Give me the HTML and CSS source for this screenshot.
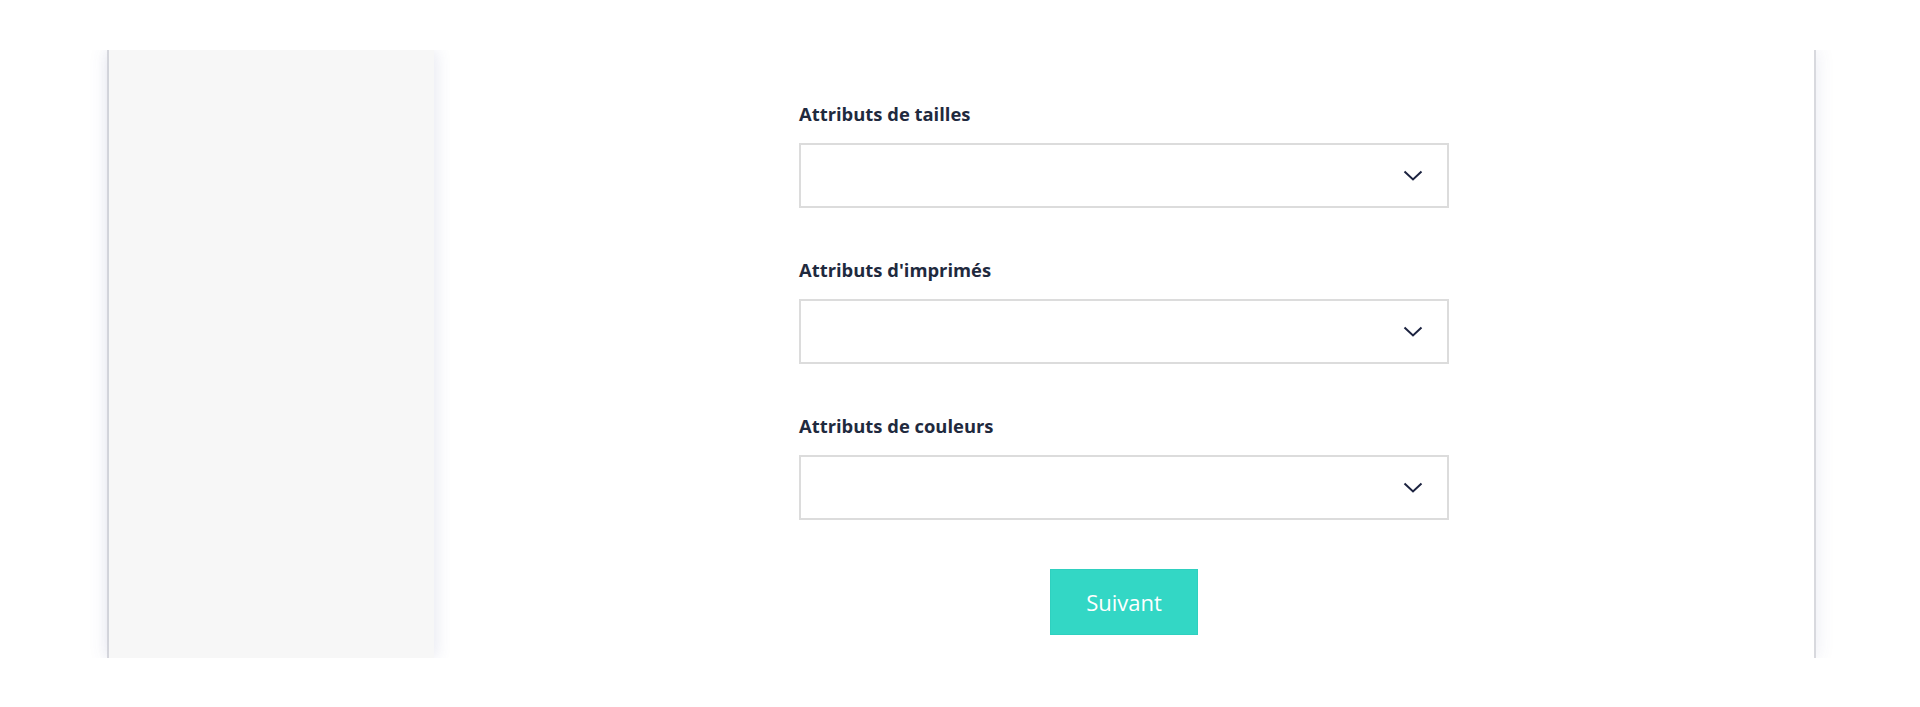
FILE: index.html
```html
<!DOCTYPE html>
<html lang="fr">
<head>
<meta charset="utf-8">
<title>Attributs</title>
<link rel="stylesheet" href="styles.css">
</head>
<body>
<div class="page">
  <div class="frame">
    <div class="app">
      <aside class="sidebar"></aside>
      <main class="main">
        <form class="form">
          <div class="field">
            <label class="label">Attributs de tailles</label>
            <div class="select"><svg class="chev" viewBox="0 0 20 11" width="20" height="11"><path d="M1.5 1.5 L10 9.5 L18.5 1.5" fill="none" stroke="#1c2340" stroke-width="2"/></svg></div>
          </div>
          <div class="field">
            <label class="label">Attributs d'imprimés</label>
            <div class="select"><svg class="chev" viewBox="0 0 20 11" width="20" height="11"><path d="M1.5 1.5 L10 9.5 L18.5 1.5" fill="none" stroke="#1c2340" stroke-width="2"/></svg></div>
          </div>
          <div class="field">
            <label class="label">Attributs de couleurs</label>
            <div class="select"><svg class="chev" viewBox="0 0 20 11" width="20" height="11"><path d="M1.5 1.5 L10 9.5 L18.5 1.5" fill="none" stroke="#1c2340" stroke-width="2"/></svg></div>
          </div>
          <div class="actions">
            <button type="button" class="btn">Suivant</button>
          </div>
        </form>
      </main>
    </div>
  </div>
</div>
</body>
</html>
```

FILE: styles.css
```css
html, body {
  margin: 0;
  padding: 0;
  background: #ffffff;
  font-family: "Open Sans", "Lato", sans-serif;
}
.page {
  padding-top: 50px;
  height: 707px;
  box-sizing: border-box;
}
.frame {
  margin-left: 90px;
  width: 1743px;
  height: 608px;
  padding: 0 17px;
  box-sizing: border-box;
  overflow: hidden;
}
.app {
  display: flex;
  height: 100%;
  border-left: 2px solid #d8d9de;
  border-right: 2px solid #d8d9de;
  box-shadow: 0 0 18px rgba(70, 80, 150, 0.12);
  background: #ffffff;
}
.sidebar {
  width: 325px;
  flex: none;
  background: #f7f7f7;
  box-shadow: 3px 0 14px rgba(70, 80, 150, 0.12);
  position: relative;
  z-index: 1;
}
.main {
  flex: 1;
  display: flex;
  justify-content: center;
  padding-top: 52px;
}
.form {
  width: 650px;
  display: flex;
  flex-direction: column;
}
.field {
  display: flex;
  flex-direction: column;
  margin-bottom: 50px;
}
.label {
  font-weight: 700;
  font-size: 18.4px;
  line-height: 24px;
  color: #1f2a3e;
  margin-bottom: 17px;
}
.select {
  height: 65px;
  border: 2px solid #dcdcdc;
  box-sizing: border-box;
  display: flex;
  align-items: center;
  justify-content: flex-end;
  padding-right: 24px;
}
.chev {
  display: block;
}
.actions {
  display: flex;
  justify-content: center;
  margin-top: -1px;
}
.btn {
  width: 148px;
  height: 66px;
  border: 1px solid #2fd0bf;
  background: #33d7c5;
  color: #ffffff;
  font-family: "Open Sans", "Lato", sans-serif;
  font-size: 22px;
  padding: 0;
  cursor: pointer;
}
```
